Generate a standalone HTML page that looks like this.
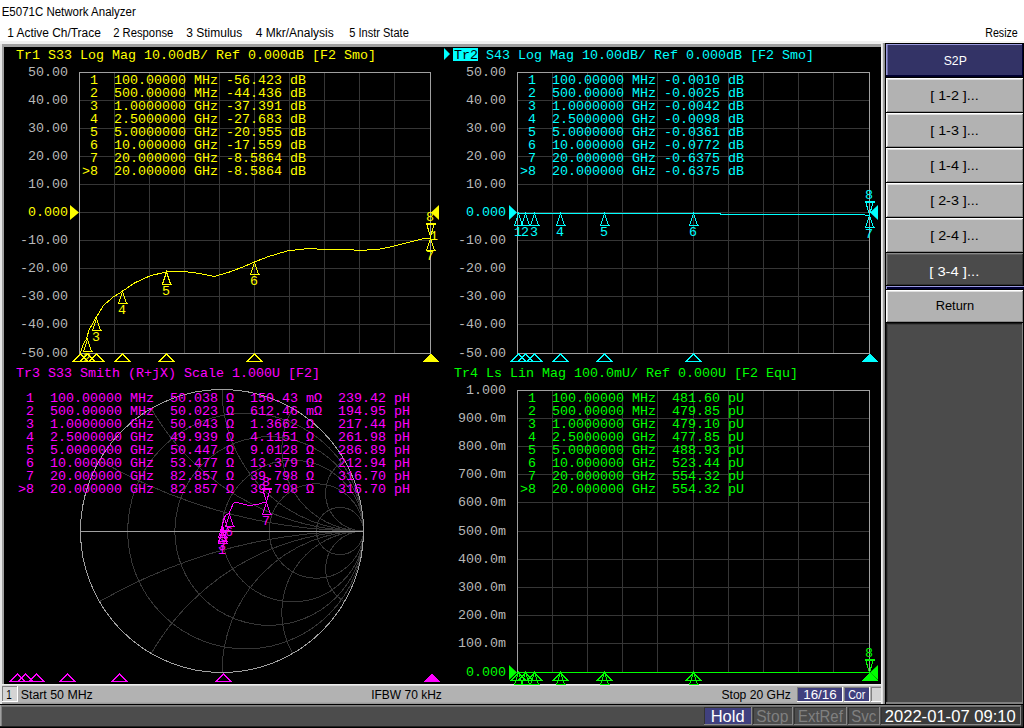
<!DOCTYPE html>
<html><head><meta charset="utf-8"><title>E5071C</title>
<style>
html,body{margin:0;padding:0;width:1024px;height:728px;overflow:hidden;background:#fff}
svg{position:absolute;left:0;top:0;display:block}
.d text{font-family:"Liberation Mono",monospace;font-size:13.33px;white-space:pre}
.u text{font-family:"Liberation Sans",sans-serif;white-space:pre}
</style></head><body>
<svg width="1024" height="728" viewBox="0 0 1024 728">
<g shape-rendering="crispEdges"><rect x="0" y="0" width="1024" height="41" fill="#fff"/><rect x="0" y="41" width="885" height="663" fill="#e6e6e6"/><rect x="0" y="41" width="885" height="3" fill="#f0f0f0"/><rect x="2" y="44" width="883" height="640" fill="#a0a0a0"/><rect x="4" y="47" width="877" height="637" fill="#000"/><rect x="2" y="684" width="883" height="20" fill="#b2b2b2"/><rect x="2" y="684" width="883" height="1" fill="#ececec"/><rect x="2" y="685" width="883" height="1" fill="#d8d8d8"/><rect x="2" y="702" width="883" height="1" fill="#a8a8a8"/><rect x="2" y="703" width="883" height="1" fill="#989898"/><rect x="0" y="684" width="2" height="20" fill="#e6e6e6"/><rect x="2" y="686" width="16" height="16" fill="#d4d4d4"/><rect x="2" y="686" width="16" height="1" fill="#808080"/><rect x="2" y="686" width="1" height="16" fill="#808080"/><rect x="2" y="701" width="16" height="1" fill="#fff"/><rect x="17" y="686" width="1" height="16" fill="#fff"/><rect x="797" y="687" width="46" height="15" fill="#40407e"/><rect x="797" y="687" width="46" height="1" fill="#808080"/><rect x="797" y="687" width="1" height="15" fill="#808080"/><rect x="797" y="701" width="46" height="1" fill="#fff"/><rect x="842" y="687" width="1" height="15" fill="#fff"/><rect x="844" y="687" width="26" height="15" fill="#40407e"/><rect x="844" y="687" width="26" height="1" fill="#808080"/><rect x="844" y="687" width="1" height="15" fill="#808080"/><rect x="844" y="701" width="26" height="1" fill="#fff"/><rect x="869" y="687" width="1" height="15" fill="#fff"/><rect x="871" y="687" width="11" height="15" fill="#d4d4d4"/><rect x="871" y="687" width="11" height="1" fill="#808080"/><rect x="871" y="687" width="1" height="15" fill="#808080"/><rect x="871" y="701" width="11" height="1" fill="#fff"/><rect x="881" y="687" width="1" height="15" fill="#fff"/><rect x="883" y="684" width="2" height="20" fill="#a0a0a0"/><rect x="881" y="41" width="143" height="663" fill="#4b4b4b"/><rect x="881" y="41" width="143" height="2" fill="#f4f4f4"/><rect x="881" y="43" width="1" height="661" fill="#f0f0f0"/><rect x="882" y="43" width="1" height="661" fill="#e0e0e0"/><rect x="883" y="43" width="1" height="661" fill="#a0a0a0"/><rect x="884" y="43" width="1" height="661" fill="#909090"/><rect x="885" y="43" width="1" height="661" fill="#000"/><rect x="886" y="41" width="138" height="2" fill="#f4f4f4"/><rect x="886" y="43" width="138" height="35" fill="#333366"/><rect x="886" y="43" width="138" height="1" fill="#000"/><rect x="886" y="44" width="138" height="1" fill="#9999dd"/><rect x="886" y="44" width="1" height="33" fill="#9999dd"/><rect x="887" y="45" width="1" height="31" fill="#6a6aa8"/><rect x="886" y="75" width="138" height="1" fill="#000033"/><rect x="886" y="76" width="138" height="1" fill="#000022"/><rect x="886" y="77" width="138" height="1" fill="#000"/><rect x="1023" y="43" width="1" height="35" fill="#000"/><rect x="1022" y="44" width="1" height="33" fill="#000033"/><rect x="886" y="78" width="138" height="35" fill="#b2b2b2"/><rect x="886" y="78" width="138" height="1" fill="#fff"/><rect x="886" y="78" width="1" height="35" fill="#fff"/><rect x="887" y="79" width="136" height="1" fill="#e0e0e0"/><rect x="887" y="79" width="1" height="33" fill="#e0e0e0"/><rect x="887" y="111" width="136" height="1" fill="#888"/><rect x="1022" y="79" width="1" height="33" fill="#888"/><rect x="886" y="112" width="138" height="1" fill="#000"/><rect x="1023" y="78" width="1" height="35" fill="#000"/><rect x="886" y="113" width="138" height="35" fill="#b2b2b2"/><rect x="886" y="113" width="138" height="1" fill="#fff"/><rect x="886" y="113" width="1" height="35" fill="#fff"/><rect x="887" y="114" width="136" height="1" fill="#e0e0e0"/><rect x="887" y="114" width="1" height="33" fill="#e0e0e0"/><rect x="887" y="146" width="136" height="1" fill="#888"/><rect x="1022" y="114" width="1" height="33" fill="#888"/><rect x="886" y="147" width="138" height="1" fill="#000"/><rect x="1023" y="113" width="1" height="35" fill="#000"/><rect x="886" y="148" width="138" height="35" fill="#b2b2b2"/><rect x="886" y="148" width="138" height="1" fill="#fff"/><rect x="886" y="148" width="1" height="35" fill="#fff"/><rect x="887" y="149" width="136" height="1" fill="#e0e0e0"/><rect x="887" y="149" width="1" height="33" fill="#e0e0e0"/><rect x="887" y="181" width="136" height="1" fill="#888"/><rect x="1022" y="149" width="1" height="33" fill="#888"/><rect x="886" y="182" width="138" height="1" fill="#000"/><rect x="1023" y="148" width="1" height="35" fill="#000"/><rect x="886" y="183" width="138" height="35" fill="#b2b2b2"/><rect x="886" y="183" width="138" height="1" fill="#fff"/><rect x="886" y="183" width="1" height="35" fill="#fff"/><rect x="887" y="184" width="136" height="1" fill="#e0e0e0"/><rect x="887" y="184" width="1" height="33" fill="#e0e0e0"/><rect x="887" y="216" width="136" height="1" fill="#888"/><rect x="1022" y="184" width="1" height="33" fill="#888"/><rect x="886" y="217" width="138" height="1" fill="#000"/><rect x="1023" y="183" width="1" height="35" fill="#000"/><rect x="886" y="218" width="138" height="35" fill="#b2b2b2"/><rect x="886" y="218" width="138" height="1" fill="#fff"/><rect x="886" y="218" width="1" height="35" fill="#fff"/><rect x="887" y="219" width="136" height="1" fill="#e0e0e0"/><rect x="887" y="219" width="1" height="33" fill="#e0e0e0"/><rect x="887" y="251" width="136" height="1" fill="#888"/><rect x="1022" y="219" width="1" height="33" fill="#888"/><rect x="886" y="252" width="138" height="1" fill="#000"/><rect x="1023" y="218" width="1" height="35" fill="#000"/><rect x="886" y="253" width="138" height="33" fill="#4b4b4b"/><rect x="886" y="253" width="138" height="1" fill="#888"/><rect x="886" y="253" width="1" height="33" fill="#888"/><rect x="887" y="254" width="136" height="1" fill="#606060"/><rect x="887" y="254" width="1" height="31" fill="#606060"/><rect x="887" y="284" width="136" height="1" fill="#333"/><rect x="1022" y="254" width="1" height="31" fill="#333"/><rect x="886" y="285" width="138" height="1" fill="#000"/><rect x="1023" y="253" width="1" height="33" fill="#000"/><rect x="886" y="286" width="138" height="4" fill="#000033"/><rect x="886" y="286" width="138" height="1" fill="#9999dd"/><rect x="886" y="286" width="1" height="3" fill="#9999dd"/><rect x="886" y="289" width="138" height="1" fill="#000"/><rect x="886" y="290" width="138" height="33" fill="#b2b2b2"/><rect x="886" y="290" width="138" height="1" fill="#fff"/><rect x="886" y="290" width="1" height="33" fill="#fff"/><rect x="887" y="291" width="136" height="1" fill="#e0e0e0"/><rect x="887" y="291" width="1" height="31" fill="#e0e0e0"/><rect x="887" y="321" width="136" height="1" fill="#888"/><rect x="1022" y="291" width="1" height="31" fill="#888"/><rect x="886" y="322" width="138" height="1" fill="#000"/><rect x="1023" y="290" width="1" height="33" fill="#000"/><rect x="886" y="323" width="138" height="381" fill="#4b4b4b"/><rect x="886" y="323" width="138" height="1" fill="#1a1a1a"/><rect x="886" y="323" width="1" height="380" fill="#1a1a1a"/><rect x="887" y="324" width="136" height="1" fill="#3c3c3c"/><rect x="887" y="324" width="1" height="378" fill="#3c3c3c"/><rect x="886" y="702" width="138" height="2" fill="#808080"/><rect x="1022" y="323" width="2" height="381" fill="#808080"/><rect x="1023" y="323" width="1" height="381" fill="#000"/><rect x="0" y="704" width="1024" height="24" fill="#4c4c4c"/><rect x="0" y="704" width="1024" height="1" fill="#000"/><rect x="0" y="705" width="1024" height="1" fill="#808080"/><rect x="0" y="706" width="1024" height="1" fill="#707070"/><rect x="0" y="705" width="1" height="22" fill="#a0a0a0"/><rect x="1" y="705" width="1" height="22" fill="#808080"/><rect x="0" y="726" width="1024" height="1" fill="#202020"/><rect x="0" y="727" width="1024" height="1" fill="#000"/><rect x="1021" y="705" width="2" height="21" fill="#333"/><rect x="1023" y="704" width="1" height="24" fill="#000"/><rect x="704" y="707" width="48" height="18" fill="#40407e"/><rect x="704" y="707" width="48" height="1" fill="#333"/><rect x="704" y="707" width="1" height="18" fill="#333"/><rect x="704" y="724" width="48" height="1" fill="#888"/><rect x="751" y="707" width="1" height="18" fill="#888"/><rect x="753" y="707" width="40" height="18" fill="#4c4c4c"/><rect x="753" y="707" width="40" height="1" fill="#333"/><rect x="753" y="707" width="1" height="18" fill="#333"/><rect x="753" y="724" width="40" height="1" fill="#888"/><rect x="792" y="707" width="1" height="18" fill="#888"/><rect x="794" y="707" width="53" height="18" fill="#4c4c4c"/><rect x="794" y="707" width="53" height="1" fill="#333"/><rect x="794" y="707" width="1" height="18" fill="#333"/><rect x="794" y="724" width="53" height="1" fill="#888"/><rect x="846" y="707" width="1" height="18" fill="#888"/><rect x="848" y="707" width="32" height="18" fill="#4c4c4c"/><rect x="848" y="707" width="32" height="1" fill="#333"/><rect x="848" y="707" width="1" height="18" fill="#333"/><rect x="848" y="724" width="32" height="1" fill="#888"/><rect x="879" y="707" width="1" height="18" fill="#888"/><rect x="881" y="707" width="140" height="18" fill="#3c3c3c"/><rect x="881" y="707" width="140" height="1" fill="#333"/><rect x="881" y="707" width="1" height="18" fill="#333"/><rect x="881" y="724" width="140" height="1" fill="#888"/><rect x="1020" y="707" width="1" height="18" fill="#888"/></g>
<g class="d"><g stroke="#363636" stroke-width="1"><line x1="114.5" y1="72" x2="114.5" y2="353"/><line x1="149.5" y1="72" x2="149.5" y2="353"/><line x1="184.5" y1="72" x2="184.5" y2="353"/><line x1="219.5" y1="72" x2="219.5" y2="353"/><line x1="254.5" y1="72" x2="254.5" y2="353"/><line x1="289.5" y1="72" x2="289.5" y2="353"/><line x1="324.5" y1="72" x2="324.5" y2="353"/><line x1="359.5" y1="72" x2="359.5" y2="353"/><line x1="394.5" y1="72" x2="394.5" y2="353"/><line x1="79" y1="100.5" x2="430" y2="100.5"/><line x1="79" y1="128.5" x2="430" y2="128.5"/><line x1="79" y1="156.5" x2="430" y2="156.5"/><line x1="79" y1="184.5" x2="430" y2="184.5"/><line x1="79" y1="212.5" x2="430" y2="212.5"/><line x1="79" y1="240.5" x2="430" y2="240.5"/><line x1="79" y1="268.5" x2="430" y2="268.5"/><line x1="79" y1="296.5" x2="430" y2="296.5"/><line x1="79" y1="324.5" x2="430" y2="324.5"/></g><rect x="79.5" y="72.5" width="351" height="281" fill="none" stroke="#a0a0a0" stroke-width="1"/><g stroke="#363636" stroke-width="1"><line x1="552.5" y1="72" x2="552.5" y2="353"/><line x1="587.5" y1="72" x2="587.5" y2="353"/><line x1="622.5" y1="72" x2="622.5" y2="353"/><line x1="657.5" y1="72" x2="657.5" y2="353"/><line x1="693.5" y1="72" x2="693.5" y2="353"/><line x1="728.5" y1="72" x2="728.5" y2="353"/><line x1="763.5" y1="72" x2="763.5" y2="353"/><line x1="798.5" y1="72" x2="798.5" y2="353"/><line x1="833.5" y1="72" x2="833.5" y2="353"/><line x1="517" y1="100.5" x2="869" y2="100.5"/><line x1="517" y1="128.5" x2="869" y2="128.5"/><line x1="517" y1="156.5" x2="869" y2="156.5"/><line x1="517" y1="184.5" x2="869" y2="184.5"/><line x1="517" y1="212.5" x2="869" y2="212.5"/><line x1="517" y1="240.5" x2="869" y2="240.5"/><line x1="517" y1="268.5" x2="869" y2="268.5"/><line x1="517" y1="296.5" x2="869" y2="296.5"/><line x1="517" y1="324.5" x2="869" y2="324.5"/></g><rect x="517.5" y="72.5" width="352" height="281" fill="none" stroke="#a0a0a0" stroke-width="1"/><g stroke="#363636" stroke-width="1"><line x1="552.5" y1="390" x2="552.5" y2="672"/><line x1="587.5" y1="390" x2="587.5" y2="672"/><line x1="622.5" y1="390" x2="622.5" y2="672"/><line x1="657.5" y1="390" x2="657.5" y2="672"/><line x1="693.5" y1="390" x2="693.5" y2="672"/><line x1="728.5" y1="390" x2="728.5" y2="672"/><line x1="763.5" y1="390" x2="763.5" y2="672"/><line x1="798.5" y1="390" x2="798.5" y2="672"/><line x1="833.5" y1="390" x2="833.5" y2="672"/><line x1="517" y1="418.5" x2="869" y2="418.5"/><line x1="517" y1="446.5" x2="869" y2="446.5"/><line x1="517" y1="474.5" x2="869" y2="474.5"/><line x1="517" y1="502.5" x2="869" y2="502.5"/><line x1="517" y1="531.5" x2="869" y2="531.5"/><line x1="517" y1="559.5" x2="869" y2="559.5"/><line x1="517" y1="587.5" x2="869" y2="587.5"/><line x1="517" y1="615.5" x2="869" y2="615.5"/><line x1="517" y1="643.5" x2="869" y2="643.5"/></g><rect x="517.5" y="390.5" width="352" height="282" fill="none" stroke="#a0a0a0" stroke-width="1"/><clipPath id="sc"><circle cx="222" cy="531" r="141.5"/></clipPath><g clip-path="url(#sc)" fill="none" stroke="#363636" stroke-width="1" shape-rendering="crispEdges"><circle cx="245.58" cy="531" r="117.92"/><circle cx="269.17" cy="531" r="94.33"/><circle cx="292.75" cy="531" r="70.75"/><circle cx="316.33" cy="531" r="47.17"/><circle cx="339.92" cy="531" r="23.58"/><circle cx="363.50" cy="2.91" r="528.09"/><circle cx="363.50" cy="1059.09" r="528.09"/><circle cx="363.50" cy="285.91" r="245.09"/><circle cx="363.50" cy="776.09" r="245.09"/><circle cx="363.50" cy="389.50" r="141.50"/><circle cx="363.50" cy="672.50" r="141.50"/><circle cx="363.50" cy="449.30" r="81.70"/><circle cx="363.50" cy="612.70" r="81.70"/><circle cx="363.50" cy="493.09" r="37.91"/><circle cx="363.50" cy="568.91" r="37.91"/></g><circle cx="222" cy="531" r="141.5" fill="none" stroke="#a0a0a0" stroke-width="1" shape-rendering="crispEdges"/><line x1="80.5" y1="531.5" x2="363.5" y2="531.5" stroke="#a0a0a0" stroke-width="1"/><rect x="453" y="48" width="25" height="13" fill="#00ffff"/><polygon points="444,48 444,60 450,54" fill="#00ffff"/><polygon points="70,205 70,220 79,212.5" fill="#ffff00"/><polygon points="439,205 439,220 431,212.5" fill="#ffff00"/><polygon points="509,205 509,220 517,212.5" fill="#00ffff"/><polygon points="878,205 878,220 870,212.5" fill="#00ffff"/><polygon points="509,665 509,680 517,672.5" fill="#00ff00"/><polygon points="878,665 878,680 870,672.5" fill="#00ff00"/><clipPath id="c1"><rect x="79" y="72" width="352" height="282"/></clipPath><g clip-path="url(#c1)"><polyline points="79.6,355.0 83.1,344.3 86.5,339.0 89.0,330.0 95.5,318.5 103.5,305.4 113.1,297.1 122.5,291.3 134.9,282.7 151.0,275.5 166.2,272.0 183.1,271.4 197.4,273.2 214.4,276.4 229.6,272.0 243.9,266.6 254.0,262.1 268.6,256.5 287.1,251.0 302.0,249.1 313.1,248.6 320.5,249.3 342.8,249.7 361.3,250.2 376.2,249.7 391.0,246.9 407.7,242.6 422.5,238.9 430.5,238.0" fill="none" stroke="#ffff00" stroke-width="1" shape-rendering="crispEdges"/></g><polyline points="517.0,213.5 720.0,213.5 720.0,214.5 860.0,214.5 869.0,215.5" fill="none" stroke="#00ffff" stroke-width="1" shape-rendering="crispEdges"/><polyline points="517.0,672.5 869.0,672.5" fill="none" stroke="#00ff00" stroke-width="1" shape-rendering="crispEdges"/><polyline points="222.0,531.0 222.0,528.0 222.5,525.0 223.5,519.0 226.0,515.0 229.0,513.6 233.0,504.2 235.2,502.0 241.8,503.6 248.4,505.3 257.1,504.7 263.7,502.5 266.0,502.0" fill="none" stroke="#ff00ff" stroke-width="1" shape-rendering="crispEdges"/><path d="M87.5,339.5 L83.5,351.5 L91.5,351.5 Z M82.5,351.5 L92.5,351.5" fill="none" stroke="#ffff00" stroke-width="1" shape-rendering="crispEdges"/><path d="M96.5,318.5 L92.5,330.5 L100.5,330.5 Z M91.5,330.5 L101.5,330.5" fill="none" stroke="#ffff00" stroke-width="1" shape-rendering="crispEdges"/><path d="M122.5,291.5 L118.5,303.5 L126.5,303.5 Z M117.5,303.5 L127.5,303.5" fill="none" stroke="#ffff00" stroke-width="1" shape-rendering="crispEdges"/><path d="M166.5,272.0 L162.5,284.0 L170.5,284.0 Z M161.5,284.0 L171.5,284.0" fill="none" stroke="#ffff00" stroke-width="1" shape-rendering="crispEdges"/><path d="M254.5,262.5 L250.5,274.5 L258.5,274.5 Z M249.5,274.5 L259.5,274.5" fill="none" stroke="#ffff00" stroke-width="1" shape-rendering="crispEdges"/><path d="M430.5,238.5 L426.5,250.5 L434.5,250.5 Z M425.5,250.5 L435.5,250.5" fill="none" stroke="#ffff00" stroke-width="1" shape-rendering="crispEdges"/><path d="M430.5,236.5 L426.5,223.5 L434.5,223.5 Z M425.5,223.5 L435.5,223.5 M425.5,224.5 L435.5,224.5" fill="none" stroke="#ffff00" stroke-width="1" shape-rendering="crispEdges"/><path d="M80.5,354.0 L73.5,361.0 L87.5,361.0 Z" fill="none" stroke="#ffff00" stroke-width="1" shape-rendering="crispEdges"/><path d="M87.5,354.0 L80.5,361.0 L94.5,361.0 Z" fill="none" stroke="#ffff00" stroke-width="1" shape-rendering="crispEdges"/><path d="M96.5,354.0 L89.5,361.0 L103.5,361.0 Z" fill="none" stroke="#ffff00" stroke-width="1" shape-rendering="crispEdges"/><path d="M122.5,354.0 L115.5,361.0 L129.5,361.0 Z" fill="none" stroke="#ffff00" stroke-width="1" shape-rendering="crispEdges"/><path d="M166.5,354.0 L159.5,361.0 L173.5,361.0 Z" fill="none" stroke="#ffff00" stroke-width="1" shape-rendering="crispEdges"/><path d="M254.5,354.0 L247.5,361.0 L261.5,361.0 Z" fill="none" stroke="#ffff00" stroke-width="1" shape-rendering="crispEdges"/><polygon points="430.5,353.5 422,362.0 439,362.0" fill="#ffff00" shape-rendering="crispEdges"/><path d="M518.5,213.5 L514.5,225.5 L522.5,225.5 Z M513.5,225.5 L523.5,225.5" fill="none" stroke="#00ffff" stroke-width="1" shape-rendering="crispEdges"/><path d="M518.5,354.0 L511.5,361.0 L525.5,361.0 Z" fill="none" stroke="#00ffff" stroke-width="1" shape-rendering="crispEdges"/><path d="M525.5,213.5 L521.5,225.5 L529.5,225.5 Z M520.5,225.5 L530.5,225.5" fill="none" stroke="#00ffff" stroke-width="1" shape-rendering="crispEdges"/><path d="M525.5,354.0 L518.5,361.0 L532.5,361.0 Z" fill="none" stroke="#00ffff" stroke-width="1" shape-rendering="crispEdges"/><path d="M534.5,213.5 L530.5,225.5 L538.5,225.5 Z M529.5,225.5 L539.5,225.5" fill="none" stroke="#00ffff" stroke-width="1" shape-rendering="crispEdges"/><path d="M534.5,354.0 L527.5,361.0 L541.5,361.0 Z" fill="none" stroke="#00ffff" stroke-width="1" shape-rendering="crispEdges"/><path d="M560.5,213.5 L556.5,225.5 L564.5,225.5 Z M555.5,225.5 L565.5,225.5" fill="none" stroke="#00ffff" stroke-width="1" shape-rendering="crispEdges"/><path d="M560.5,354.0 L553.5,361.0 L567.5,361.0 Z" fill="none" stroke="#00ffff" stroke-width="1" shape-rendering="crispEdges"/><path d="M604.5,213.5 L600.5,225.5 L608.5,225.5 Z M599.5,225.5 L609.5,225.5" fill="none" stroke="#00ffff" stroke-width="1" shape-rendering="crispEdges"/><path d="M604.5,354.0 L597.5,361.0 L611.5,361.0 Z" fill="none" stroke="#00ffff" stroke-width="1" shape-rendering="crispEdges"/><path d="M693.5,213.5 L689.5,225.5 L697.5,225.5 Z M688.5,225.5 L698.5,225.5" fill="none" stroke="#00ffff" stroke-width="1" shape-rendering="crispEdges"/><path d="M693.5,354.0 L686.5,361.0 L700.5,361.0 Z" fill="none" stroke="#00ffff" stroke-width="1" shape-rendering="crispEdges"/><path d="M869.5,215.5 L865.5,227.5 L873.5,227.5 Z M864.5,227.5 L874.5,227.5" fill="none" stroke="#00ffff" stroke-width="1" shape-rendering="crispEdges"/><path d="M869.5,214.5 L865.5,201.5 L873.5,201.5 Z M864.5,201.5 L874.5,201.5 M864.5,202.5 L874.5,202.5" fill="none" stroke="#00ffff" stroke-width="1" shape-rendering="crispEdges"/><polygon points="869.5,353.5 861,362.0 878,362.0" fill="#00ffff" shape-rendering="crispEdges"/><path d="M518.5,672.5 L514.5,684.5 L522.5,684.5 Z M513.5,684.5 L523.5,684.5" fill="none" stroke="#00ff00" stroke-width="1" shape-rendering="crispEdges"/><path d="M518.5,673.0 L511.5,680.0 L525.5,680.0 Z" fill="none" stroke="#00ff00" stroke-width="1" shape-rendering="crispEdges"/><path d="M525.5,672.5 L521.5,684.5 L529.5,684.5 Z M520.5,684.5 L530.5,684.5" fill="none" stroke="#00ff00" stroke-width="1" shape-rendering="crispEdges"/><path d="M525.5,673.0 L518.5,680.0 L532.5,680.0 Z" fill="none" stroke="#00ff00" stroke-width="1" shape-rendering="crispEdges"/><path d="M534.5,672.5 L530.5,684.5 L538.5,684.5 Z M529.5,684.5 L539.5,684.5" fill="none" stroke="#00ff00" stroke-width="1" shape-rendering="crispEdges"/><path d="M534.5,673.0 L527.5,680.0 L541.5,680.0 Z" fill="none" stroke="#00ff00" stroke-width="1" shape-rendering="crispEdges"/><path d="M560.5,672.5 L556.5,684.5 L564.5,684.5 Z M555.5,684.5 L565.5,684.5" fill="none" stroke="#00ff00" stroke-width="1" shape-rendering="crispEdges"/><path d="M560.5,673.0 L553.5,680.0 L567.5,680.0 Z" fill="none" stroke="#00ff00" stroke-width="1" shape-rendering="crispEdges"/><path d="M604.5,672.5 L600.5,684.5 L608.5,684.5 Z M599.5,684.5 L609.5,684.5" fill="none" stroke="#00ff00" stroke-width="1" shape-rendering="crispEdges"/><path d="M604.5,673.0 L597.5,680.0 L611.5,680.0 Z" fill="none" stroke="#00ff00" stroke-width="1" shape-rendering="crispEdges"/><path d="M693.5,672.5 L689.5,684.5 L697.5,684.5 Z M688.5,684.5 L698.5,684.5" fill="none" stroke="#00ff00" stroke-width="1" shape-rendering="crispEdges"/><path d="M693.5,673.0 L686.5,680.0 L700.5,680.0 Z" fill="none" stroke="#00ff00" stroke-width="1" shape-rendering="crispEdges"/><path d="M869.5,672.5 L865.5,659.5 L873.5,659.5 Z M864.5,659.5 L874.5,659.5 M864.5,660.5 L874.5,660.5" fill="none" stroke="#00ff00" stroke-width="1" shape-rendering="crispEdges"/><polygon points="869.5,672.5 861,681.0 878,681.0" fill="#00ff00" shape-rendering="crispEdges"/><path d="M222.5,531.5 L218.5,543.5 L226.5,543.5 Z M217.5,543.5 L227.5,543.5" fill="none" stroke="#ff00ff" stroke-width="1" shape-rendering="crispEdges"/><path d="M222.5,529.5 L218.5,541.5 L226.5,541.5 Z M217.5,541.5 L227.5,541.5" fill="none" stroke="#ff00ff" stroke-width="1" shape-rendering="crispEdges"/><path d="M222.5,525.5 L218.5,537.5 L226.5,537.5 Z M217.5,537.5 L227.5,537.5" fill="none" stroke="#ff00ff" stroke-width="1" shape-rendering="crispEdges"/><path d="M224.5,518.5 L220.5,530.5 L228.5,530.5 Z M219.5,530.5 L229.5,530.5" fill="none" stroke="#ff00ff" stroke-width="1" shape-rendering="crispEdges"/><path d="M229.5,514.5 L225.5,526.5 L233.5,526.5 Z M224.5,526.5 L234.5,526.5" fill="none" stroke="#ff00ff" stroke-width="1" shape-rendering="crispEdges"/><path d="M266.5,502.5 L262.5,514.5 L270.5,514.5 Z M261.5,514.5 L271.5,514.5" fill="none" stroke="#ff00ff" stroke-width="1" shape-rendering="crispEdges"/><path d="M266.5,501.5 L262.5,488.5 L270.5,488.5 Z M261.5,488.5 L271.5,488.5 M261.5,489.5 L271.5,489.5" fill="none" stroke="#ff00ff" stroke-width="1" shape-rendering="crispEdges"/><path d="M17.5,674.0 L10.5,681.0 L24.5,681.0 Z" fill="none" stroke="#ff00ff" stroke-width="1" shape-rendering="crispEdges"/><path d="M25.5,674.0 L18.5,681.0 L32.5,681.0 Z" fill="none" stroke="#ff00ff" stroke-width="1" shape-rendering="crispEdges"/><path d="M36.5,674.0 L29.5,681.0 L43.5,681.0 Z" fill="none" stroke="#ff00ff" stroke-width="1" shape-rendering="crispEdges"/><path d="M67.5,674.0 L60.5,681.0 L74.5,681.0 Z" fill="none" stroke="#ff00ff" stroke-width="1" shape-rendering="crispEdges"/><path d="M119.5,674.0 L112.5,681.0 L126.5,681.0 Z" fill="none" stroke="#ff00ff" stroke-width="1" shape-rendering="crispEdges"/><path d="M223.5,674.0 L216.5,681.0 L230.5,681.0 Z" fill="none" stroke="#ff00ff" stroke-width="1" shape-rendering="crispEdges"/><polygon points="431.5,673.5 423,682.0 440,682.0" fill="#ff00ff" shape-rendering="crispEdges"/><text x="16" y="59" fill="#ffff00">Tr1 S33 Log Mag 10.00dB/ Ref 0.000dB [F2 Smo]</text><text x="454" y="59" fill="#000">Tr2</text><text x="454" y="59" fill="#00ffff">    S43 Log Mag 10.00dB/ Ref 0.000dB [F2 Smo]</text><text x="16" y="377" fill="#ff00ff">Tr3 S33 Smith (R+jX) Scale 1.000U [F2]</text><text x="454" y="377" fill="#00ff00">Tr4 Ls Lin Mag 100.0mU/ Ref 0.000U [F2 Equ]</text><text x="28" y="76" fill="#b8b8b8">50.00</text><text x="466" y="76" fill="#b8b8b8">50.00</text><text x="28" y="104" fill="#b8b8b8">40.00</text><text x="466" y="104" fill="#b8b8b8">40.00</text><text x="28" y="132" fill="#b8b8b8">30.00</text><text x="466" y="132" fill="#b8b8b8">30.00</text><text x="28" y="160" fill="#b8b8b8">20.00</text><text x="466" y="160" fill="#b8b8b8">20.00</text><text x="28" y="188" fill="#b8b8b8">10.00</text><text x="466" y="188" fill="#b8b8b8">10.00</text><text x="28" y="216" fill="#ffff00">0.000</text><text x="466" y="216" fill="#00ffff">0.000</text><text x="20" y="244" fill="#b8b8b8">-10.00</text><text x="458" y="244" fill="#b8b8b8">-10.00</text><text x="20" y="272" fill="#b8b8b8">-20.00</text><text x="458" y="272" fill="#b8b8b8">-20.00</text><text x="20" y="300" fill="#b8b8b8">-30.00</text><text x="458" y="300" fill="#b8b8b8">-30.00</text><text x="20" y="328" fill="#b8b8b8">-40.00</text><text x="458" y="328" fill="#b8b8b8">-40.00</text><text x="20" y="357" fill="#b8b8b8">-50.00</text><text x="458" y="357" fill="#b8b8b8">-50.00</text><text x="466" y="394" fill="#b8b8b8">1.000</text><text x="458" y="422" fill="#b8b8b8">900.0m</text><text x="458" y="450" fill="#b8b8b8">800.0m</text><text x="458" y="478" fill="#b8b8b8">700.0m</text><text x="458" y="506" fill="#b8b8b8">600.0m</text><text x="458" y="535" fill="#b8b8b8">500.0m</text><text x="458" y="563" fill="#b8b8b8">400.0m</text><text x="458" y="591" fill="#b8b8b8">300.0m</text><text x="458" y="619" fill="#b8b8b8">200.0m</text><text x="458" y="647" fill="#b8b8b8">100.0m</text><text x="466" y="676" fill="#00ff00">0.000</text><text x="82" y="84" fill="#ffff00"> 1  100.00000 MHz -56.423 dB</text><text x="520" y="84" fill="#00ffff"> 1  100.00000 MHz -0.0010 dB</text><text x="18" y="402" fill="#ff00ff"> 1  100.00000 MHz  50.038 Ω  150.43 mΩ  239.42 pH</text><text x="520" y="402" fill="#00ff00"> 1  100.00000 MHz  481.60 pU</text><text x="82" y="97" fill="#ffff00"> 2  500.00000 MHz -44.436 dB</text><text x="520" y="97" fill="#00ffff"> 2  500.00000 MHz -0.0025 dB</text><text x="18" y="415" fill="#ff00ff"> 2  500.00000 MHz  50.023 Ω  612.46 mΩ  194.95 pH</text><text x="520" y="415" fill="#00ff00"> 2  500.00000 MHz  479.85 pU</text><text x="82" y="110" fill="#ffff00"> 3  1.0000000 GHz -37.391 dB</text><text x="520" y="110" fill="#00ffff"> 3  1.0000000 GHz -0.0042 dB</text><text x="18" y="428" fill="#ff00ff"> 3  1.0000000 GHz  50.043 Ω  1.3662 Ω   217.44 pH</text><text x="520" y="428" fill="#00ff00"> 3  1.0000000 GHz  479.10 pU</text><text x="82" y="123" fill="#ffff00"> 4  2.5000000 GHz -27.683 dB</text><text x="520" y="123" fill="#00ffff"> 4  2.5000000 GHz -0.0098 dB</text><text x="18" y="441" fill="#ff00ff"> 4  2.5000000 GHz  49.939 Ω  4.1151 Ω   261.98 pH</text><text x="520" y="441" fill="#00ff00"> 4  2.5000000 GHz  477.85 pU</text><text x="82" y="136" fill="#ffff00"> 5  5.0000000 GHz -20.955 dB</text><text x="520" y="136" fill="#00ffff"> 5  5.0000000 GHz -0.0361 dB</text><text x="18" y="454" fill="#ff00ff"> 5  5.0000000 GHz  50.447 Ω  9.0128 Ω   286.89 pH</text><text x="520" y="454" fill="#00ff00"> 5  5.0000000 GHz  488.93 pU</text><text x="82" y="149" fill="#ffff00"> 6  10.000000 GHz -17.559 dB</text><text x="520" y="149" fill="#00ffff"> 6  10.000000 GHz -0.0772 dB</text><text x="18" y="467" fill="#ff00ff"> 6  10.000000 GHz  53.477 Ω  13.379 Ω   212.94 pH</text><text x="520" y="467" fill="#00ff00"> 6  10.000000 GHz  523.44 pU</text><text x="82" y="162" fill="#ffff00"> 7  20.000000 GHz -8.5864 dB</text><text x="520" y="162" fill="#00ffff"> 7  20.000000 GHz -0.6375 dB</text><text x="18" y="480" fill="#ff00ff"> 7  20.000000 GHz  82.857 Ω  39.798 Ω   316.70 pH</text><text x="520" y="480" fill="#00ff00"> 7  20.000000 GHz  554.32 pU</text><text x="82" y="175" fill="#ffff00">&gt;8  20.000000 GHz -8.5864 dB</text><text x="520" y="175" fill="#00ffff">&gt;8  20.000000 GHz -0.6375 dB</text><text x="18" y="493" fill="#ff00ff">&gt;8  20.000000 GHz  82.857 Ω  39.798 Ω   316.70 pH</text><text x="520" y="493" fill="#00ff00">&gt;8  20.000000 GHz  554.32 pU</text><text x="83" y="362" fill="#ffff00">2</text><text x="92" y="341" fill="#ffff00">3</text><text x="118" y="314" fill="#ffff00">4</text><text x="162" y="294.5" fill="#ffff00">5</text><text x="250" y="285" fill="#ffff00">6</text><text x="426" y="260" fill="#ffff00">7</text><text x="426" y="221" fill="#ffff00">8</text><text x="430" y="240" fill="#ffff00">1</text><text x="514" y="236" fill="#00ffff">1</text><text x="521" y="236" fill="#00ffff">2</text><text x="530" y="236" fill="#00ffff">3</text><text x="556" y="236" fill="#00ffff">4</text><text x="600" y="236" fill="#00ffff">5</text><text x="689" y="236" fill="#00ffff">6</text><text x="865" y="238" fill="#00ffff">7</text><text x="865" y="199" fill="#00ffff">8</text><text x="865" y="657" fill="#00ff00">8</text><text x="218" y="554" fill="#ff00ff">1</text><text x="218" y="550" fill="#ff00ff">3</text><text x="220" y="541" fill="#ff00ff">5</text><text x="225" y="536" fill="#ff00ff">6</text><text x="262" y="525" fill="#ff00ff">7</text><text x="262" y="486" fill="#ff00ff">8</text></g>
<g class="u"><text x="1.70" y="16" fill="#000" font-size="12" textLength="134.11" lengthAdjust="spacingAndGlyphs">E5071C Network Analyzer</text><text x="7.20" y="37" fill="#000" font-size="12" textLength="93.62" lengthAdjust="spacingAndGlyphs">1 Active Ch/Trace</text><text x="113.20" y="37" fill="#000" font-size="12" textLength="60.10" lengthAdjust="spacingAndGlyphs">2 Response</text><text x="186.20" y="37" fill="#000" font-size="12" textLength="56.10" lengthAdjust="spacingAndGlyphs">3 Stimulus</text><text x="255.70" y="37" fill="#000" font-size="12" textLength="78.11" lengthAdjust="spacingAndGlyphs">4 Mkr/Analysis</text><text x="349.21" y="37" fill="#000" font-size="12" textLength="59.59" lengthAdjust="spacingAndGlyphs">5 Instr State</text><text x="985.19" y="37" fill="#000" font-size="12" textLength="32.60" lengthAdjust="spacingAndGlyphs">Resize</text><text x="6.23" y="699" fill="#000" font-size="12" textLength="5.50" lengthAdjust="spacingAndGlyphs">1</text><text x="20.71" y="699" fill="#000" font-size="12" textLength="72.10" lengthAdjust="spacingAndGlyphs">Start 50 MHz</text><text x="371.21" y="699" fill="#000" font-size="12" textLength="70.60" lengthAdjust="spacingAndGlyphs">IFBW 70 kHz</text><text x="721.45" y="699" fill="#000" font-size="12" textLength="69.35" lengthAdjust="spacingAndGlyphs">Stop 20 GHz</text><text x="803.19" y="699" fill="#fff" font-size="12.5" textLength="33.60" lengthAdjust="spacingAndGlyphs">16/16</text><text x="848.20" y="699" fill="#fff" font-size="12.5" textLength="17.08" lengthAdjust="spacingAndGlyphs">Cor</text><text x="943.69" y="65" fill="#fff" font-size="12.5" textLength="23.11" lengthAdjust="spacingAndGlyphs">S2P</text><text x="930.20" y="100" fill="#000" font-size="12.5" textLength="48.59" lengthAdjust="spacingAndGlyphs">[ 1-2 ]...</text><text x="930.20" y="135" fill="#000" font-size="12.5" textLength="48.59" lengthAdjust="spacingAndGlyphs">[ 1-3 ]...</text><text x="930.20" y="170" fill="#000" font-size="12.5" textLength="48.59" lengthAdjust="spacingAndGlyphs">[ 1-4 ]...</text><text x="930.20" y="205" fill="#000" font-size="12.5" textLength="48.59" lengthAdjust="spacingAndGlyphs">[ 2-3 ]...</text><text x="930.20" y="240" fill="#000" font-size="12.5" textLength="48.59" lengthAdjust="spacingAndGlyphs">[ 2-4 ]...</text><text x="929.20" y="276" fill="#fff" font-size="12.5" textLength="50.11" lengthAdjust="spacingAndGlyphs">[ 3-4 ]...</text><text x="935.70" y="310" fill="#000" font-size="12.5" textLength="38.60" lengthAdjust="spacingAndGlyphs">Return</text><text x="710.68" y="722" fill="#fff" font-size="16.5" textLength="33.89" lengthAdjust="spacingAndGlyphs">Hold</text><text x="756.22" y="722" fill="#808080" font-size="16.5" textLength="32.09" lengthAdjust="spacingAndGlyphs">Stop</text><text x="797.96" y="722" fill="#808080" font-size="16.5" textLength="44.84" lengthAdjust="spacingAndGlyphs">ExtRef</text><text x="851.23" y="722" fill="#808080" font-size="16.5" textLength="25.08" lengthAdjust="spacingAndGlyphs">Svc</text><text x="884.70" y="722" fill="#fff" font-size="16.5" textLength="131.10" lengthAdjust="spacingAndGlyphs">2022-01-07 09:10</text></g>
</svg>
</body></html>
